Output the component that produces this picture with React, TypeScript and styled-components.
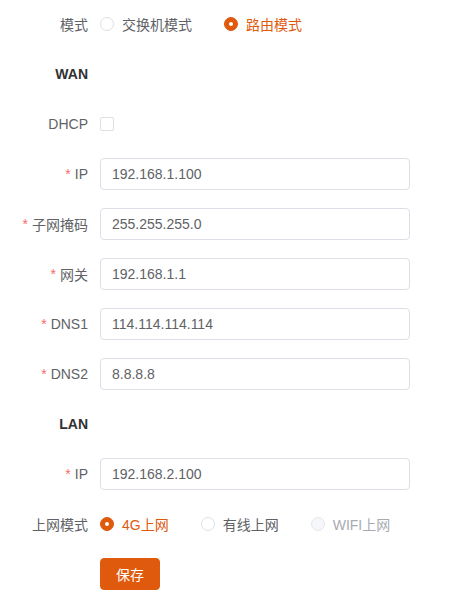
import { useState } from "react";
import styled, { createGlobalStyle } from "styled-components";

const Global = createGlobalStyle`
  body {
    margin: 0;
    background: #fff;
    font-family: "Liberation Sans", "Noto Sans CJK SC", sans-serif;
    font-size: 14px;
    color: #606266;
  }
`;

const primary = "#e05a0e";

const Form = styled.form`
  width: 410px;
  padding-top: 8px;
`;

const Item = styled.div`
  display: flex;
  height: 32px;
  margin-bottom: 18px;
`;

const Label = styled.label<{ $bold?: boolean }>`
  width: 100px;
  flex: none;
  box-sizing: border-box;
  padding-right: 12px;
  display: flex;
  align-items: center;
  justify-content: flex-end;
  font-size: 14px;
  color: ${(p) => (p.$bold ? "#303133" : "#606266")};
  font-weight: ${(p) => (p.$bold ? 700 : 400)};
`;

const Star = styled.span`
  color: #f56c6c;
  margin-right: 4px;
`;

const Content = styled.div`
  flex: 1;
  display: flex;
  align-items: center;
`;

const Input = styled.input`
  width: 100%;
  height: 32px;
  box-sizing: border-box;
  border: 1px solid #dcdfe6;
  border-radius: 4px;
  padding: 0 11px;
  font: inherit;
  font-size: 14px;
  color: #606266;
  outline: none;
`;

const RadioLabel = styled.label<{ $checked: boolean; $disabled?: boolean }>`
  display: inline-flex;
  flex: none;
  align-items: center;
  white-space: nowrap;
  margin-right: 32px;
  cursor: ${(p) => (p.$disabled ? "not-allowed" : "pointer")};
  color: ${(p) => (p.$disabled ? "#a8abb2" : p.$checked ? primary : "#606266")};
`;

const Circle = styled.span<{ $checked: boolean; $disabled?: boolean }>`
  width: 14px;
  height: 14px;
  flex: none;
  box-sizing: border-box;
  border-radius: 50%;
  border: 1px solid ${(p) => (p.$checked ? primary : p.$disabled ? "#e4e7ed" : "#dcdfe6")};
  background: ${(p) => (p.$checked ? primary : p.$disabled ? "#f5f7fa" : "#fff")};
  display: flex;
  align-items: center;
  justify-content: center;
  margin-right: 8px;
  &::after {
    content: "";
    width: 4px;
    height: 4px;
    border-radius: 50%;
    background: #fff;
    display: ${(p) => (p.$checked ? "block" : "none")};
  }
`;

const Box = styled.span`
  width: 14px;
  height: 14px;
  box-sizing: border-box;
  border: 1px solid #dcdfe6;
  border-radius: 2px;
  background: #fff;
`;

const Button = styled.button`
  height: 32px;
  padding: 0 15px;
  border: 1px solid ${primary};
  border-radius: 4px;
  background: ${primary};
  color: #fff;
  font: inherit;
  font-size: 14px;
  cursor: pointer;
`;

type Opt = { value: string; label: string; disabled?: boolean };

function RadioGroup({ options, value, onChange }: { options: Opt[]; value: string; onChange: (v: string) => void }) {
  return (
    <Content>
      {options.map((o) => (
        <RadioLabel
          key={o.value}
          $checked={o.value === value}
          $disabled={o.disabled}
          onClick={() => !o.disabled && onChange(o.value)}
        >
          <Circle $checked={o.value === value} $disabled={o.disabled} />
          {o.label}
        </RadioLabel>
      ))}
    </Content>
  );
}

function Field({ label, value, required = true }: { label: string; value: string; required?: boolean }) {
  return (
    <Item>
      <Label>
        {required && <Star>*</Star>}
        {label}
      </Label>
      <Content>
        <Input defaultValue={value} />
      </Content>
    </Item>
  );
}

export default function App() {
  const [mode, setMode] = useState("router");
  const [net, setNet] = useState("4g");

  return (
    <>
      <Global />
      <Form onSubmit={(e) => e.preventDefault()}>
        <Item>
          <Label>模式</Label>
          <RadioGroup
            value={mode}
            onChange={setMode}
            options={[
              { value: "switch", label: "交换机模式" },
              { value: "router", label: "路由模式" },
            ]}
          />
        </Item>
        <Item>
          <Label $bold>WAN</Label>
        </Item>
        <Item>
          <Label>DHCP</Label>
          <Content>
            <Box />
          </Content>
        </Item>
        <Field label="IP" value="192.168.1.100" />
        <Field label="子网掩码" value="255.255.255.0" />
        <Field label="网关" value="192.168.1.1" />
        <Field label="DNS1" value="114.114.114.114" />
        <Field label="DNS2" value="8.8.8.8" />
        <Item>
          <Label $bold>LAN</Label>
        </Item>
        <Field label="IP" value="192.168.2.100" />
        <Item>
          <Label>上网模式</Label>
          <RadioGroup
            value={net}
            onChange={setNet}
            options={[
              { value: "4g", label: "4G上网" },
              { value: "wired", label: "有线上网" },
              { value: "wifi", label: "WIFI上网", disabled: true },
            ]}
          />
        </Item>
        <Item>
          <Label />
          <Content>
            <Button type="submit">保存</Button>
          </Content>
        </Item>
      </Form>
    </>
  );
}
